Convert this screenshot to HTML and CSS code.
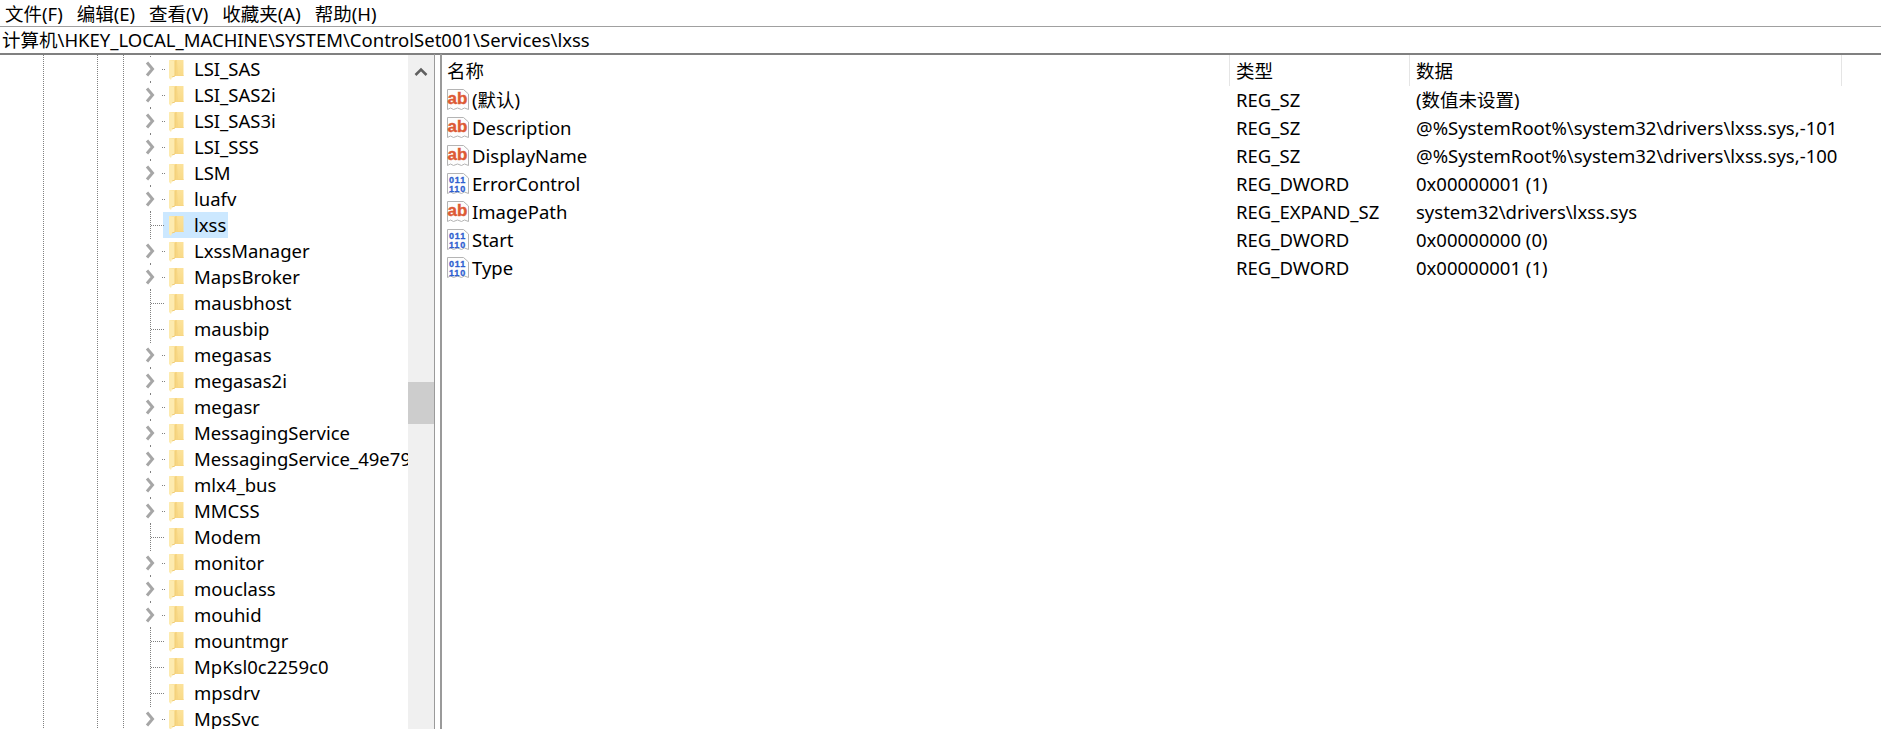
FILE: index.html
```html
<!DOCTYPE html>
<html lang="zh-CN">
  <head>
    <meta charset="UTF-8" />
    <title>注册表编辑器</title>
    <link rel="stylesheet" href="styles.css">
  </head>
  <body>
    <svg class="defs" width="0" height="0">
      <linearGradient id="folder-back" x1="0" y1="0" x2="0" y2="1">
        <stop offset="0" stop-color="#fce29a"/>
        <stop offset="1" stop-color="#f9da86"/>
      </linearGradient>
      <symbol id="branch" viewBox="0 0 23 26">
        <path d="M4 6.500l5.500 6.500-5.500 6.500" fill="none" stroke="#a6a6a6" stroke-width="3"/>
        <path d="M19 13.500h1M21 13.500h1" stroke="#808080"/>
        <path d="M7.500 0v1M7.500 25v1" stroke="#808080"/>
      </symbol>
      <symbol id="leaf" viewBox="0 0 23 26">
        <path d="M7.500 0v26M8 13.500h14" stroke="#808080" stroke-dasharray="1 1" fill="none"/>
      </symbol>
      <symbol id="folder" viewBox="0 0 15 21">
        <path d="M1 1h13.500v16H1z" fill="url(#folder-back)"/>
        <path d="M6 1h2l1 15h5.500v1H6z" fill="#f7d683"/>
        <path d="M0 1l6 1v15l-3 1-1 3-2-2z" fill="#fdebb0"/>
        <path d="M6 2v15l-3 1" fill="none" stroke="#f2cd74"/>
      </symbol>
      <symbol id="page" viewBox="0 0 24 24">
        <path d="M1.500 1.500h16l5 4.500v15.500l-4-1.500-3 1.500-4-1.500-4 1.500-3-1.500-3 1.500z" fill="#fdfdfd" stroke="#b4b4b4"/>
      </symbol>
    </svg>

    <div class="menubar">
      <span class="menu-item">文件(F)</span>
      <span class="menu-item">编辑(E)</span>
      <span class="menu-item">查看(V)</span>
      <span class="menu-item">收藏夹(A)</span>
      <span class="menu-item">帮助(H)</span>
    </div>
    <div class="address">计算机\HKEY_LOCAL_MACHINE\SYSTEM\ControlSet001\Services\lxss</div>

    <div class="main">
      <div class="tree">
        <div class="guide guide-1"></div>
        <div class="guide guide-2"></div>
        <div class="guide guide-3"></div>

        <div class="tree-row"><svg class="twist"><use href="#branch"/></svg><span class="node"><svg class="folder"><use href="#folder"/></svg>LSI_SAS</span></div>
        <div class="tree-row"><svg class="twist"><use href="#branch"/></svg><span class="node"><svg class="folder"><use href="#folder"/></svg>LSI_SAS2i</span></div>
        <div class="tree-row"><svg class="twist"><use href="#branch"/></svg><span class="node"><svg class="folder"><use href="#folder"/></svg>LSI_SAS3i</span></div>
        <div class="tree-row"><svg class="twist"><use href="#branch"/></svg><span class="node"><svg class="folder"><use href="#folder"/></svg>LSI_SSS</span></div>
        <div class="tree-row"><svg class="twist"><use href="#branch"/></svg><span class="node"><svg class="folder"><use href="#folder"/></svg>LSM</span></div>
        <div class="tree-row"><svg class="twist"><use href="#branch"/></svg><span class="node"><svg class="folder"><use href="#folder"/></svg>luafv</span></div>
        <div class="tree-row selected"><svg class="twist"><use href="#leaf"/></svg><span class="node"><svg class="folder"><use href="#folder"/></svg>lxss</span></div>
        <div class="tree-row"><svg class="twist"><use href="#branch"/></svg><span class="node"><svg class="folder"><use href="#folder"/></svg>LxssManager</span></div>
        <div class="tree-row"><svg class="twist"><use href="#branch"/></svg><span class="node"><svg class="folder"><use href="#folder"/></svg>MapsBroker</span></div>
        <div class="tree-row"><svg class="twist"><use href="#leaf"/></svg><span class="node"><svg class="folder"><use href="#folder"/></svg>mausbhost</span></div>
        <div class="tree-row"><svg class="twist"><use href="#leaf"/></svg><span class="node"><svg class="folder"><use href="#folder"/></svg>mausbip</span></div>
        <div class="tree-row"><svg class="twist"><use href="#branch"/></svg><span class="node"><svg class="folder"><use href="#folder"/></svg>megasas</span></div>
        <div class="tree-row"><svg class="twist"><use href="#branch"/></svg><span class="node"><svg class="folder"><use href="#folder"/></svg>megasas2i</span></div>
        <div class="tree-row"><svg class="twist"><use href="#branch"/></svg><span class="node"><svg class="folder"><use href="#folder"/></svg>megasr</span></div>
        <div class="tree-row"><svg class="twist"><use href="#branch"/></svg><span class="node"><svg class="folder"><use href="#folder"/></svg>MessagingService</span></div>
        <div class="tree-row"><svg class="twist"><use href="#branch"/></svg><span class="node"><svg class="folder"><use href="#folder"/></svg>MessagingService_49e79</span></div>
        <div class="tree-row"><svg class="twist"><use href="#branch"/></svg><span class="node"><svg class="folder"><use href="#folder"/></svg>mlx4_bus</span></div>
        <div class="tree-row"><svg class="twist"><use href="#branch"/></svg><span class="node"><svg class="folder"><use href="#folder"/></svg>MMCSS</span></div>
        <div class="tree-row"><svg class="twist"><use href="#leaf"/></svg><span class="node"><svg class="folder"><use href="#folder"/></svg>Modem</span></div>
        <div class="tree-row"><svg class="twist"><use href="#branch"/></svg><span class="node"><svg class="folder"><use href="#folder"/></svg>monitor</span></div>
        <div class="tree-row"><svg class="twist"><use href="#branch"/></svg><span class="node"><svg class="folder"><use href="#folder"/></svg>mouclass</span></div>
        <div class="tree-row"><svg class="twist"><use href="#branch"/></svg><span class="node"><svg class="folder"><use href="#folder"/></svg>mouhid</span></div>
        <div class="tree-row"><svg class="twist"><use href="#leaf"/></svg><span class="node"><svg class="folder"><use href="#folder"/></svg>mountmgr</span></div>
        <div class="tree-row"><svg class="twist"><use href="#leaf"/></svg><span class="node"><svg class="folder"><use href="#folder"/></svg>MpKsl0c2259c0</span></div>
        <div class="tree-row"><svg class="twist"><use href="#leaf"/></svg><span class="node"><svg class="folder"><use href="#folder"/></svg>mpsdrv</span></div>
        <div class="tree-row"><svg class="twist"><use href="#branch"/></svg><span class="node"><svg class="folder"><use href="#folder"/></svg>MpsSvc</span></div>
      </div>

      <div class="scrollbar">
        <svg class="scroll-up" width="14" height="9" viewBox="0 0 14 9"><path d="M1.500 8l5.500-5.500 5.500 5.500" fill="none" stroke="#606060" stroke-width="2.500"/></svg>
        <div class="scroll-thumb"></div>
      </div>
      <div class="splitter"></div>

      <div class="list">
        <div class="list-row list-head">
          <div class="cell cell-name">名称</div>
          <div class="cell">类型</div>
          <div class="cell">数据</div>
        </div>
        <div class="list-row">
          <div class="cell cell-name"><svg class="value-icon" viewBox="0 0 24 24"><use href="#page"/><text x="11.500" y="16" class="icon-ab">ab</text></svg>(默认)</div>
          <div class="cell">REG_SZ</div>
          <div class="cell">(数值未设置)</div>
        </div>
        <div class="list-row">
          <div class="cell cell-name"><svg class="value-icon" viewBox="0 0 24 24"><use href="#page"/><text x="11.500" y="16" class="icon-ab">ab</text></svg>Description</div>
          <div class="cell">REG_SZ</div>
          <div class="cell">@%SystemRoot%\system32\drivers\lxss.sys,-101</div>
        </div>
        <div class="list-row">
          <div class="cell cell-name"><svg class="value-icon" viewBox="0 0 24 24"><use href="#page"/><text x="11.500" y="16" class="icon-ab">ab</text></svg>DisplayName</div>
          <div class="cell">REG_SZ</div>
          <div class="cell">@%SystemRoot%\system32\drivers\lxss.sys,-100</div>
        </div>
        <div class="list-row">
          <div class="cell cell-name"><svg class="value-icon" viewBox="0 0 24 24"><use href="#page"/><text x="11.500" y="10.500" class="icon-bin">011</text><text x="11.500" y="19.500" class="icon-bin">110</text></svg>ErrorControl</div>
          <div class="cell">REG_DWORD</div>
          <div class="cell">0x00000001 (1)</div>
        </div>
        <div class="list-row">
          <div class="cell cell-name"><svg class="value-icon" viewBox="0 0 24 24"><use href="#page"/><text x="11.500" y="16" class="icon-ab">ab</text></svg>ImagePath</div>
          <div class="cell">REG_EXPAND_SZ</div>
          <div class="cell">system32\drivers\lxss.sys</div>
        </div>
        <div class="list-row">
          <div class="cell cell-name"><svg class="value-icon" viewBox="0 0 24 24"><use href="#page"/><text x="11.500" y="10.500" class="icon-bin">011</text><text x="11.500" y="19.500" class="icon-bin">110</text></svg>Start</div>
          <div class="cell">REG_DWORD</div>
          <div class="cell">0x00000000 (0)</div>
        </div>
        <div class="list-row">
          <div class="cell cell-name"><svg class="value-icon" viewBox="0 0 24 24"><use href="#page"/><text x="11.500" y="10.500" class="icon-bin">011</text><text x="11.500" y="19.500" class="icon-bin">110</text></svg>Type</div>
          <div class="cell">REG_DWORD</div>
          <div class="cell">0x00000001 (1)</div>
        </div>
      </div>
    </div>
  </body>
</html>
```

FILE: styles.css
```css
html,
body {
  height: 100%;
}

body {
  margin: 0;
  display: flex;
  flex-direction: column;
  overflow: hidden;
  background-color: #fff;
  color: #000;
  font-family: "Noto Sans", "Noto Sans CJK SC", sans-serif;
  font-size: 18.5px;
}

.defs {
  position: absolute;
}

.menubar {
  height: 26px;
  padding-left: 5px;
  display: flex;
  align-items: center;
  gap: 14px;
  flex: none;
}

.address {
  height: 29px;
  padding: 0 0 2px 2px;
  display: flex;
  align-items: center;
  box-sizing: border-box;
  border-top: 1px solid #a0a0a0;
  border-bottom: 2px solid #808080;
  flex: none;
}

.main {
  flex: 1;
  min-height: 0;
  display: flex;
}

.tree {
  width: 408px;
  padding-top: 1px;
  position: relative;
  overflow: hidden;
  flex: none;
}

.guide {
  position: absolute;
  top: 0;
  bottom: 0;
  width: 1px;
  background: repeating-linear-gradient(#808080 0 1px, transparent 1px 2px);
}

.guide-1 {
  left: 43px;
}

.guide-2 {
  left: 97px;
}

.guide-3 {
  left: 123px;
}

.tree-row {
  height: 26px;
  padding-left: 143px;
  display: flex;
  white-space: nowrap;
}

.twist {
  width: 23px;
  height: 26px;
  position: relative;
  z-index: 1;
  flex: none;
}

.node {
  height: 26px;
  margin-left: -3px;
  padding: 0 2px 0 6px;
  display: flex;
  align-items: center;
  line-height: 26px;
}

.selected .node {
  background-color: #cce8ff;
}

.folder {
  width: 15px;
  height: 21px;
  margin-right: 10px;
  flex: none;
}

.scrollbar {
  width: 26px;
  position: relative;
  background-color: #f0f0f0;
  flex: none;
}

.scroll-up {
  position: absolute;
  top: 12px;
  left: 6px;
}

.scroll-thumb {
  position: absolute;
  top: 327px;
  left: 0;
  right: 0;
  height: 42px;
  background-color: #cdcdcd;
}

.splitter {
  width: 5px;
  margin-top: -1px;
  border-left: 1px solid #9a9a9a;
  border-right: 2px solid #9a9a9a;
  flex: none;
}

.list {
  flex: 1;
  min-width: 0;
}

.list-row {
  height: 28px;
  display: grid;
  grid-template-columns: 788px 180px 432px 1fr;
  white-space: nowrap;
}

.list-head {
  height: 31px;
}

.cell {
  padding: 0 0 2px 6px;
  display: flex;
  align-items: center;
}

.list-head .cell {
  border-right: 1px solid #e5e5e5;
}

.list-head .cell-name {
  padding-left: 5px;
}

.cell-name {
  padding-left: 4px;
}

.value-icon {
  width: 24px;
  height: 24px;
  margin: 2px 2px 0 0;
  flex: none;
}

.icon-ab {
  font-family: "Liberation Sans", sans-serif;
  font-size: 17px;
  font-weight: 700;
  text-anchor: middle;
  fill: #dd5a35;
  stroke: #dd5a35;
  stroke-width: 0.4px;
}

.icon-bin {
  font-family: "Liberation Sans", sans-serif;
  font-size: 9px;
  font-weight: 700;
  letter-spacing: 0.8px;
  text-anchor: middle;
  fill: #2f5fd0;
  stroke: #2f5fd0;
  stroke-width: 0.3px;
}
```
